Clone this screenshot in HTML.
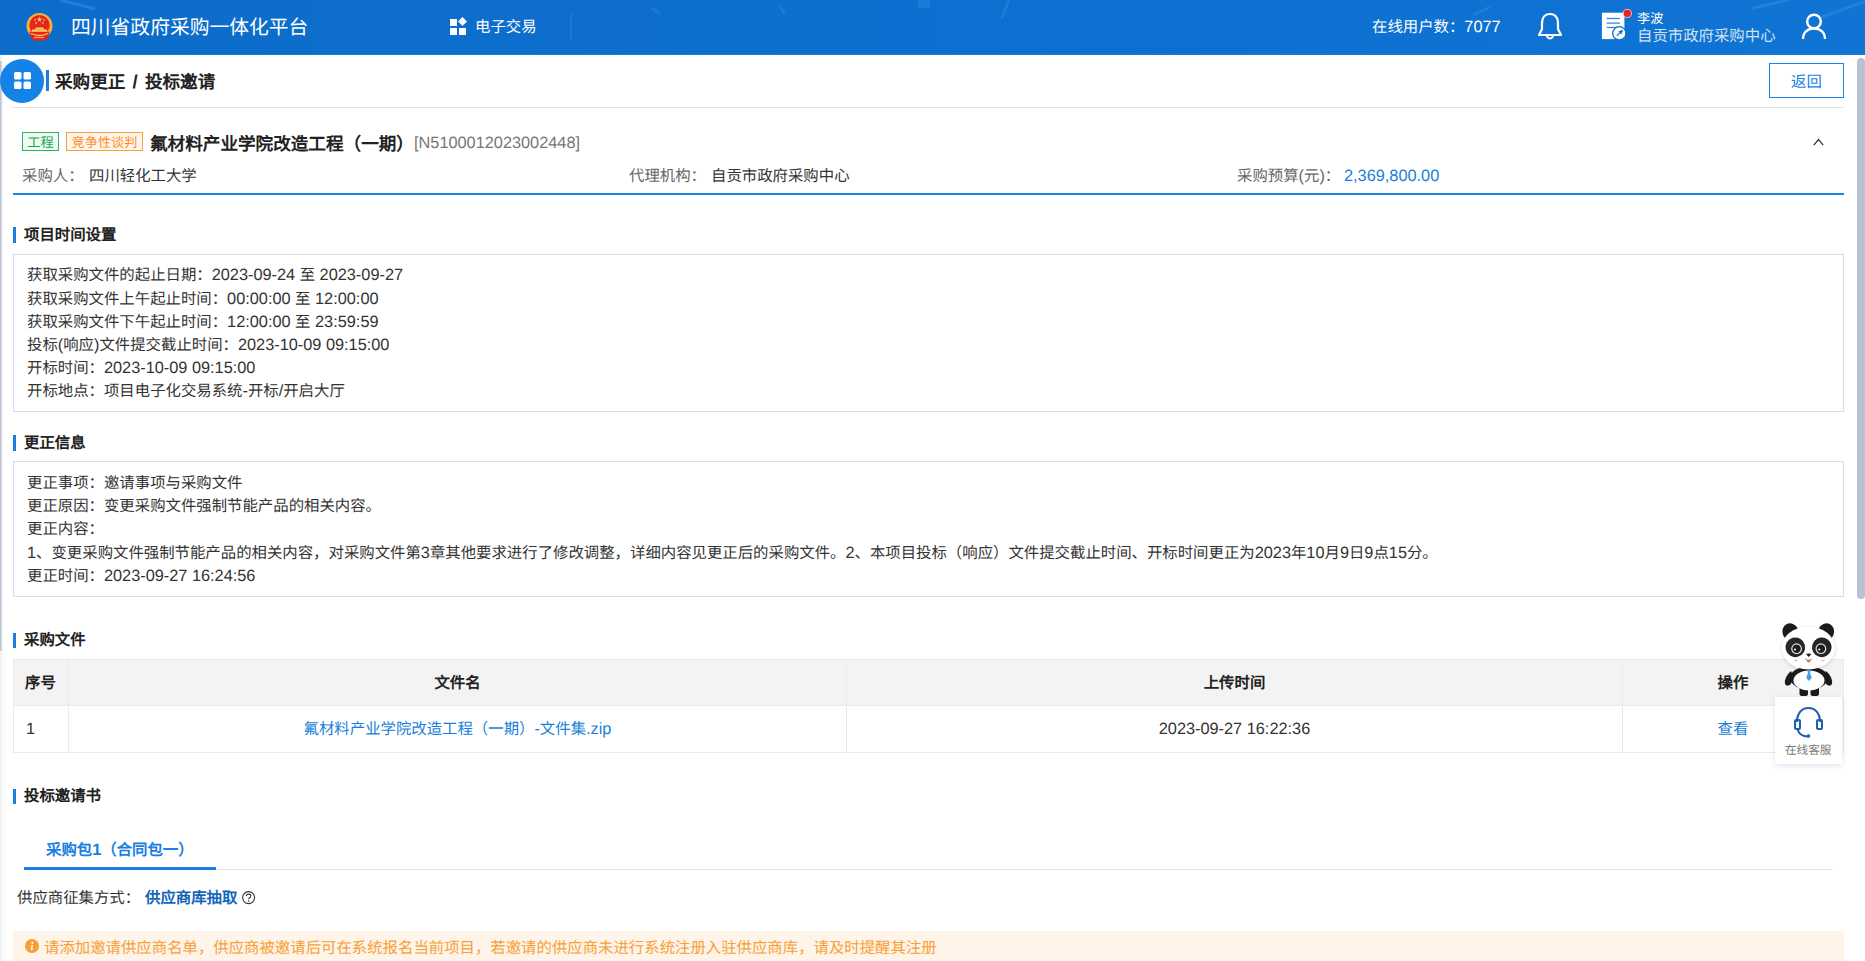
<!DOCTYPE html>
<html lang="zh-CN">
<head>
<meta charset="utf-8">
<style>
@font-face{font-family:"LSA";src:local("Liberation Sans");size-adjust:106%;font-weight:400}
@font-face{font-family:"LSA";src:local("Liberation Sans Bold");size-adjust:106%;font-weight:700}
*{box-sizing:border-box;margin:0;padding:0}
html,body{width:1865px;height:961px;overflow:hidden;background:#fff}
body{position:relative;font-family:"LSA","Liberation Sans",sans-serif;color:#333;font-size:15.4px;text-rendering:geometricPrecision}
.a{position:absolute;white-space:nowrap}
#hdr{position:absolute;left:0;top:0;width:1865px;height:55px;background:linear-gradient(to right,#0c6cc9,#0d6fcf 50%,#0f74d4);overflow:hidden;border-bottom:1px solid #1679dc}
.w{color:#fff}
.bar{position:absolute;width:3px;background:#1a7fe0}
.sec{position:absolute;font-weight:bold;color:#222;font-size:15.4px;line-height:18px}
.box{position:absolute;left:13px;width:1831px;border:1px solid #d6dce8;background:#fff}
.ln{position:absolute;left:27px;font-size:15.4px;color:#333;line-height:23px}
.tb{position:absolute;border-color:#e6eaf2;border-style:solid}
</style>
</head>
<body>
<div id="hdr">
  <svg class="a" style="left:0;top:0" width="1865" height="55">
    <g stroke="#2a86e0" stroke-width="3" opacity="0.7">
      <line x1="60" y1="0" x2="95" y2="9"/>
      <line x1="1752" y1="8.4" x2="1790" y2="-0.5"/>
      <line x1="1820" y1="17.7" x2="1866" y2="1"/>
    </g>
    <g stroke="#2a88e2" stroke-width="2.5" opacity="0.55">
      <line x1="652" y1="8" x2="660" y2="14"/>
      <line x1="780" y1="7" x2="785" y2="14"/>
      <line x1="1002" y1="18" x2="1009" y2="0"/>
      <line x1="1473" y1="15" x2="1490" y2="7"/>
    </g>
    <rect x="918" y="0" width="12" height="8" fill="#2a88e2" opacity="0.5"/>
  </svg>
  <!-- emblem -->
  <svg class="a" style="left:26px;top:13px" width="27" height="28" viewBox="0 0 27 28">
    <circle cx="13.5" cy="13" r="13" fill="#f3b13c"/>
    <circle cx="13.5" cy="12.3" r="10.2" fill="#e4261c"/>
    <path d="M13.5 3.6 L14.2 5.6 L16.3 5.6 L14.6 6.9 L15.3 8.9 L13.5 7.7 L11.7 8.9 L12.4 6.9 L10.7 5.6 L12.8 5.6 Z" fill="#f7c45a"/>
    <circle cx="9.2" cy="6.8" r="0.9" fill="#f7c45a"/>
    <circle cx="17.8" cy="6.8" r="0.9" fill="#f7c45a"/>
    <circle cx="10.2" cy="9.9" r="0.9" fill="#f7c45a"/>
    <circle cx="16.8" cy="9.9" r="0.9" fill="#f7c45a"/>
    <path d="M8.5 16.5 L10 14.5 L17 14.5 L18.5 16.5 Z" fill="#f8c865"/>
    <rect x="6" y="16.5" width="15" height="2.3" fill="#f8c865"/>
    <path d="M3.5 18.5 Q4 24 7.5 27.5 L19.5 27.5 Q23 24 23.5 18.5 Q13.5 22 3.5 18.5 Z" fill="#e4261c"/>
    <path d="M5 20.5 Q13.5 24.5 22 20.5" stroke="#f8c865" stroke-width="1.3" fill="none"/>
    <path d="M8 25 L10 24 L12 25 L14 24 L16 25 L18 24" stroke="#f8c865" stroke-width="1" fill="none"/>
  </svg>
  <div class="a w" style="left:71px;top:14px;font-size:19.8px;line-height:28px">四川省政府采购一体化平台</div>
  <svg class="a" style="left:450px;top:17px" width="18" height="18" viewBox="0 0 18 18">
    <rect x="0" y="2" width="7" height="7" fill="#fff"/>
    <rect x="0" y="11" width="7" height="7" fill="#fff"/>
    <rect x="9" y="11" width="7" height="7" fill="#fff"/>
    <path d="M12.5 0 L17 4.5 L12.5 9 L8 4.5 Z" fill="#fff"/>
  </svg>
  <div class="a w" style="left:475px;top:16.5px;font-size:15.4px;line-height:20px">电子交易</div>
  <div class="a" style="left:570px;top:14px;width:2px;height:26px;background:#1c7ad9"></div>
  <div class="a w" style="left:1372px;top:17px;font-size:15.4px;line-height:20px">在线用户数：7077</div>
  <svg class="a" style="left:1537px;top:12px" width="26" height="29" viewBox="0 0 26 29">
    <path d="M13 2 C7.5 2 5 6 5 11 L5 17 L2 23 L24 23 L21 17 L21 11 C21 6 18.5 2 13 2 Z" fill="none" stroke="#fff" stroke-width="2.2" stroke-linejoin="round"/>
    <path d="M9.5 24 Q13 29 16.5 24" fill="none" stroke="#fff" stroke-width="2"/>
  </svg>
  <svg class="a" style="left:1600px;top:9px" width="34" height="32" viewBox="0 0 34 32">
    <rect x="1.9" y="3.7" width="22.5" height="26.4" fill="#fff"/>
    <line x1="6.7" y1="9.5" x2="19.9" y2="9.5" stroke="#2f7fd0" stroke-width="1.2"/>
    <line x1="6.7" y1="14.1" x2="19.9" y2="14.1" stroke="#2f7fd0" stroke-width="1.2"/>
    <line x1="6.7" y1="18.5" x2="16" y2="18.5" stroke="#2f7fd0" stroke-width="1.2"/>
    <circle cx="19.3" cy="24.3" r="6.6" fill="#fff" stroke="#0d6ecd" stroke-width="1.3"/>
    <path d="M21.5 20.5 L23.3 22.3 L22.3 23 L21.2 25.5 L18.3 22.6 L20.8 21.5 Z" fill="#1d6fc8"/>
    <line x1="19.6" y1="24" x2="16.8" y2="26.8" stroke="#1d6fc8" stroke-width="1.2"/>
    <circle cx="27.3" cy="4.4" r="4.1" fill="#e8231c" stroke="#fff" stroke-width="0.7"/>
  </svg>
  <div class="a w" style="left:1637px;top:9.5px;font-size:13.2px;line-height:16px">李波</div>
  <div class="a" style="left:1637px;top:27px;font-size:15.4px;line-height:18px;color:#d3e2f3">自贡市政府采购中心</div>
  <svg class="a" style="left:1801px;top:13px" width="26" height="27" viewBox="0 0 26 27">
    <circle cx="13" cy="8.5" r="6.8" fill="none" stroke="#fff" stroke-width="2.4"/>
    <path d="M2 26 C2 19 7 15.5 13 15.5 C19 15.5 24 19 24 26" fill="none" stroke="#fff" stroke-width="2.4"/>
  </svg>
</div>

<!-- left edge line -->
<div class="a" style="left:0;top:55px;width:6px;height:906px;background:linear-gradient(to right,#ececec,#f9f9f9 30%,#fff)"></div>
<div class="a" style="left:0;top:61px;width:2px;height:590px;background:linear-gradient(to right,#b6bfd0,#d7dce6)"></div>

<!-- page title -->
<div class="a" style="left:0px;top:59px;width:44px;height:44px;border-radius:50%;background:#1482e6"></div>
<svg class="a" style="left:14px;top:72px" width="18" height="18" viewBox="0 0 18 18">
  <rect x="0" y="0" width="7.5" height="7.5" rx="1.5" fill="#fff"/>
  <rect x="9.5" y="0" width="7.5" height="7.5" rx="1.5" fill="#fff"/>
  <rect x="0" y="9.5" width="7.5" height="7.5" rx="1.5" fill="#fff"/>
  <rect x="9.5" y="9.5" width="7.5" height="7.5" rx="1.5" fill="#fff"/>
</svg>
<div class="a" style="left:46px;top:70px;width:3px;height:21px;background:#1a7fe0"></div>
<div class="a" style="left:55px;top:70px;font-size:17.6px;line-height:24px;font-weight:bold;color:#222;word-spacing:2px">采购更正 / 投标邀请</div>
<div class="a" style="left:1769px;top:63px;width:75px;height:35px;border:1px solid #1a84e8;color:#1a7fe0;font-size:15.4px;line-height:36px;text-align:center">返回</div>
<div class="a" style="left:13px;top:107px;width:1831px;height:1px;background:#e3e3e3"></div>

<!-- scrollbar -->
<div class="a" style="left:1857px;top:58px;width:8px;height:541px;border-radius:4px;background:#b9c2d3"></div>

<!-- project heading -->
<div class="a" style="left:22px;top:132px;width:37px;height:19px;border:1px solid #2bb462;background:#effaf3;color:#17a651;font-size:13.2px;line-height:19px;text-align:center">工程</div>
<div class="a" style="left:66px;top:132px;width:77px;height:19px;border:1px solid #ff9c3c;background:#fff6ee;color:#ff8e1c;font-size:13.2px;line-height:19px;text-align:center">竞争性谈判</div>
<div class="a" style="left:150px;top:132px;font-size:17.6px;line-height:24px;font-weight:bold;color:#222">氟材料产业学院改造工程（一期）</div>
<div class="a" style="left:414px;top:133px;font-size:15.4px;line-height:20px;color:#777">[N5100012023002448]</div>
<svg class="a" style="left:1813px;top:138px" width="11" height="8" viewBox="0 0 11 8"><path d="M0.8 7.2 L5.5 1.5 L10.2 7.2" fill="none" stroke="#333" stroke-width="1.2"/></svg>
<div class="a" style="left:22px;top:165.5px;font-size:15.4px;line-height:20px;color:#666">采购人：</div>
<div class="a" style="left:89px;top:165.5px;font-size:15.4px;line-height:20px;color:#333">四川轻化工大学</div>
<div class="a" style="left:629px;top:165.5px;font-size:15.4px;line-height:20px;color:#666">代理机构：</div>
<div class="a" style="left:711px;top:165.5px;font-size:15.4px;line-height:20px;color:#333">自贡市政府采购中心</div>
<div class="a" style="left:1237px;top:165.5px;font-size:15.4px;line-height:20px;color:#666">采购预算(元)：</div>
<div class="a" style="left:1344px;top:165.5px;font-size:15.4px;line-height:20px;color:#1a7fd8">2,369,800.00</div>
<div class="a" style="left:13px;top:193px;width:1831px;height:2px;background:#1a84e0"></div>

<!-- section 1 -->
<div class="bar" style="left:13px;top:227px;height:16px"></div>
<div class="sec" style="left:24px;top:226px">项目时间设置</div>
<div class="box" style="top:254px;height:158px"></div>
<div class="ln" style="top:264px">获取采购文件的起止日期：2023-09-24 至 2023-09-27</div>
<div class="ln" style="top:288px">获取采购文件上午起止时间：00:00:00 至 12:00:00</div>
<div class="ln" style="top:311px">获取采购文件下午起止时间：12:00:00 至 23:59:59</div>
<div class="ln" style="top:334px">投标(响应)文件提交截止时间：2023-10-09 09:15:00</div>
<div class="ln" style="top:357px">开标时间：2023-10-09 09:15:00</div>
<div class="ln" style="top:380px">开标地点：项目电子化交易系统-开标/开启大厅</div>

<!-- section 2 -->
<div class="bar" style="left:13px;top:435px;height:16px"></div>
<div class="sec" style="left:24px;top:434px">更正信息</div>
<div class="box" style="top:461px;height:136px"></div>
<div class="ln" style="top:472px">更正事项：邀请事项与采购文件</div>
<div class="ln" style="top:495px">更正原因：变更采购文件强制节能产品的相关内容。</div>
<div class="ln" style="top:518px">更正内容：</div>
<div class="ln" style="top:542px">1、变更采购文件强制节能产品的相关内容，对采购文件第3章其他要求进行了修改调整，详细内容见更正后的采购文件。2、本项目投标（响应）文件提交截止时间、开标时间更正为2023年10月9日9点15分。</div>
<div class="ln" style="top:565px">更正时间：2023-09-27 16:24:56</div>

<!-- section 3 -->
<div class="bar" style="left:13px;top:633px;height:15px"></div>
<div class="sec" style="left:24px;top:631px">采购文件</div>
<div class="a" style="left:13px;top:659px;width:1831px;height:94px;border:1px solid #e6eaf2"></div>
<div class="a" style="left:14px;top:660px;width:1829px;height:45px;background:#f3f3f3"></div>
<div class="a" style="left:14px;top:705px;width:1829px;height:1px;background:#e6eaf2"></div>
<div class="a" style="left:68px;top:660px;width:1px;height:92px;background:#e6eaf2"></div>
<div class="a" style="left:846px;top:660px;width:1px;height:92px;background:#e6eaf2"></div>
<div class="a" style="left:1622px;top:660px;width:1px;height:92px;background:#e6eaf2"></div>
<div class="a" style="left:25px;top:673px;font-size:15.4px;line-height:20px;font-weight:bold;color:#222">序号</div>
<div class="a" style="left:69px;width:777px;text-align:center;top:673px;font-size:15.4px;line-height:20px;font-weight:bold;color:#222">文件名</div>
<div class="a" style="left:847px;width:775px;text-align:center;top:673px;font-size:15.4px;line-height:20px;font-weight:bold;color:#222">上传时间</div>
<div class="a" style="left:1623px;width:220px;text-align:center;top:673px;font-size:15.4px;line-height:20px;font-weight:bold;color:#222">操作</div>
<div class="a" style="left:26px;top:719px;font-size:15.4px;line-height:20px;color:#333">1</div>
<div class="a" style="left:69px;width:777px;text-align:center;top:719px;font-size:15.4px;line-height:20px;color:#1a7fd8">氟材料产业学院改造工程（一期）-文件集.zip</div>
<div class="a" style="left:847px;width:775px;text-align:center;top:719px;font-size:15.4px;line-height:20px;color:#333">2023-09-27 16:22:36</div>
<div class="a" style="left:1623px;width:220px;text-align:center;top:719px;font-size:15.4px;line-height:20px;color:#1a7fd8">查看</div>

<!-- section 4 -->
<div class="bar" style="left:13px;top:789px;height:15px"></div>
<div class="sec" style="left:24px;top:787px">投标邀请书</div>
<div class="a" style="left:46px;top:839.5px;font-size:15.4px;line-height:20px;font-weight:bold;color:#1a7fe0">采购包1（合同包一）</div>
<div class="a" style="left:24px;top:869px;width:1809px;height:1px;background:#dde2ee"></div>
<div class="a" style="left:24px;top:867px;width:192px;height:3px;background:#1a7fe0"></div>
<div class="a" style="left:17px;top:888px;font-size:15.4px;line-height:20px;color:#333">供应商征集方式：</div>
<div class="a" style="left:145px;top:888px;font-size:15.4px;line-height:20px;font-weight:bold;color:#1566b8">供应商库抽取</div>
<svg class="a" style="left:242px;top:890.5px" width="14" height="14" viewBox="0 0 14 14"><circle cx="6.6" cy="6.6" r="6" fill="none" stroke="#333" stroke-width="1.1"/><path d="M4.4 5.1 Q4.4 3.1 6.6 3.1 Q8.8 3.1 8.8 4.9 Q8.8 6.1 7.5 6.8 Q6.7 7.3 6.7 8.3" fill="none" stroke="#333" stroke-width="1.05"/><circle cx="6.7" cy="9.9" r="0.75" fill="#333"/></svg>
<div class="a" style="left:13px;top:931px;width:1831px;height:30px;background:#fef4ea"></div>
<svg class="a" style="left:24.5px;top:939px" width="14" height="14" viewBox="0 0 14 14"><circle cx="7" cy="7" r="7" fill="#f7a035"/><circle cx="7.4" cy="3.9" r="1.05" fill="#fff"/><path d="M6.9 6 L8 6 L7.3 10.4 L8.3 10.4 L8.1 11 L5.9 11 L6.5 6.6 L6 6.6 Z" fill="#fff"/></svg>
<div class="a" style="left:44px;top:938px;font-size:15.4px;line-height:20px;color:#f7a035">请添加邀请供应商名单，供应商被邀请后可在系统报名当前项目，若邀请的供应商未进行系统注册入驻供应商库，请及时提醒其注册</div>

<!-- customer service widget -->
<div class="a" style="left:1775px;top:697px;width:67px;height:67px;background:#fff;box-shadow:0 2px 6px rgba(0,40,120,0.12)"></div>
<svg class="a" style="left:1793px;top:705px" width="31" height="33" viewBox="0 0 31 33">
  <path d="M4 17 C4 8 9 3 15.5 3 C22 3 27 8 27 17" fill="none" stroke="#1e5fb0" stroke-width="2.2"/>
  <rect x="2" y="15" width="5" height="9" rx="1" fill="none" stroke="#1e5fb0" stroke-width="2"/>
  <rect x="24" y="15" width="5" height="9" rx="1" fill="none" stroke="#1e5fb0" stroke-width="2"/>
  <path d="M4.5 24 C6 30 10 31.5 15 31.5" fill="none" stroke="#1e5fb0" stroke-width="2"/>
  <circle cx="15.5" cy="31" r="1.8" fill="#1e5fb0"/>
</svg>
<div class="a" style="left:1785px;top:743px;font-size:11.6px;line-height:14px;color:#777">在线客服</div>
<!-- panda -->
<svg class="a" style="left:1775px;top:615px" width="70" height="90" viewBox="0 0 70 90">
  <defs><filter id="sh" x="-20%" y="-20%" width="140%" height="140%"><feGaussianBlur stdDeviation="1.2"/></filter></defs>
  <ellipse cx="33.5" cy="34" rx="28" ry="23" fill="#000" opacity="0.08" filter="url(#sh)"/>
  <ellipse cx="15.5" cy="17" rx="8" ry="8.8" transform="rotate(-25 15.5 17)" fill="#1b1b1b"/>
  <ellipse cx="51" cy="17" rx="8" ry="8.8" transform="rotate(25 51 17)" fill="#1b1b1b"/>
  <path d="M16 56 Q9 62 10 69 Q12 72 15.5 69.5 L19 63 Z" fill="#1b1b1b"/>
  <path d="M51 56 Q58 62 57 69 Q55 72 51.5 69.5 L48 63 Z" fill="#1b1b1b"/>
  <rect x="24.5" y="70" width="8.5" height="11" rx="2.5" fill="#1b1b1b"/>
  <rect x="35.5" y="70" width="8.5" height="11" rx="2.5" fill="#1b1b1b"/>
  <ellipse cx="34" cy="63" rx="19" ry="11.5" fill="#1b1b1b"/>
  <ellipse cx="34" cy="65.5" rx="15.5" ry="10" fill="#fff"/>
  <path d="M32.3 55.5 L35.7 55.5 L35 58 L36.8 63 L34 66 L31.2 63 L33 58 Z" fill="#4a9be8"/>
  <ellipse cx="33.3" cy="33" rx="26.7" ry="21.5" fill="#fff"/>
  <ellipse cx="20.3" cy="32.3" rx="9.8" ry="9.9" transform="rotate(-15 20.3 32.3)" fill="#262626"/>
  <ellipse cx="46.8" cy="32.3" rx="9.8" ry="9.9" transform="rotate(15 46.8 32.3)" fill="#262626"/>
  <circle cx="21.6" cy="33.7" r="5.4" fill="#e8e8e8"/>
  <circle cx="45.9" cy="33.7" r="5.4" fill="#e8e8e8"/>
  <circle cx="21.6" cy="33.7" r="4.2" fill="#1e1e1e"/>
  <circle cx="45.9" cy="33.7" r="4.2" fill="#1e1e1e"/>
  <circle cx="20" cy="34.5" r="1" fill="#fff"/>
  <circle cx="44.3" cy="34.5" r="1" fill="#fff"/>
  <path d="M31 39 Q33.7 38 36.4 39 L33.7 42 Z" fill="#1b1b1b"/>
  <path d="M30 44 Q33.7 47 37.4 44" fill="none" stroke="#555" stroke-width="0.6"/>
  <ellipse cx="33.7" cy="46" rx="1.8" ry="1.3" fill="#e8643a"/>
  <ellipse cx="21" cy="45.5" rx="2" ry="1" fill="#f6c6c6"/>
  <ellipse cx="47.8" cy="45.5" rx="2" ry="1" fill="#f6c6c6"/>
</svg>
</body>
</html>
